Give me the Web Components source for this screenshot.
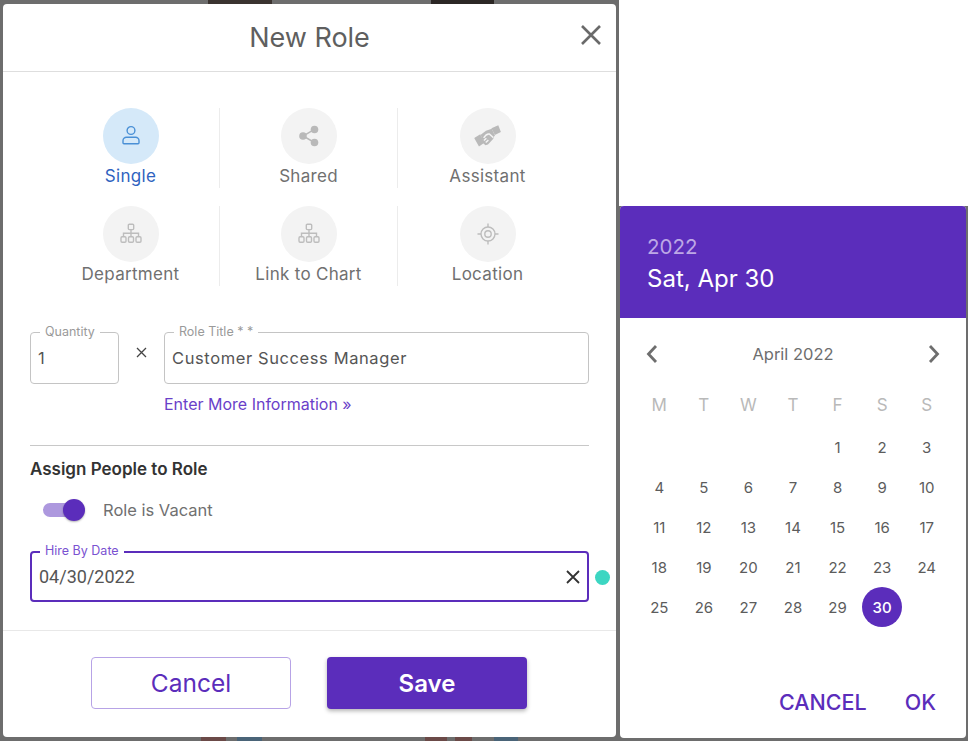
<!DOCTYPE html>
<html>
<head>
<meta charset="utf-8">
<title>New Role</title>
<style>
  html, body { margin: 0; padding: 0; background: #fff; }
  body { font-family: Inter, "Liberation Sans", sans-serif; }
</style>
</head>
<body>
<role-page></role-page>

<script>
const FONT = 'Inter, "Liberation Sans", sans-serif';

const ICONS = {
  person: `<circle cx="12" cy="6.5" r="3.9"/><path d="M7.5 13.2h9a3.5 3.5 0 0 1 3.5 3.5v2.1a.9.9 0 0 1-.9.9H4.9a.9.9 0 0 1-.9-.9v-2.1a3.5 3.5 0 0 1 3.5-3.5z"/>`,
  share: `<g fill="#b9b9b9" stroke="none"><circle cx="6" cy="12" r="3.8"/><circle cx="17.5" cy="5.5" r="3.8"/><circle cx="17.5" cy="18.5" r="3.8"/><path d="M6 11.2l11-6.5.8 1.4-11 6.5zM6.8 11.4l11 6.4-.8 1.4-11-6.4z"/></g>`,
  handshake: `<g stroke="none" fill="#b9b9b9"><path d="M15.5 4.6 21.6 2l2.3 6-5.4 2.7z"/><path d="M.2 13.4 5.6 10l3.6 7.6-4.8 3.2z"/><path d="M6 10.4l4.6-3.6 5.2-1.6 2.6 5.6-1.4 3.4-4.6 5-2.2.6-1.8-1.6z"/></g><path fill="none" stroke="#f3f3f3" stroke-width="1.3" d="M8.6 13.2c1.6-2.6 3-3.8 5-3.4l3.6 3.2M10.4 17.4l2.4-2.2M8.8 15.6l2.2-2"/>`,
  chart: `<rect x="9.3" y="2.2" width="5.4" height="5.4" rx="1"/><path d="M12 7.6v7M4.5 14.6v-3.3h15v3.3"/><rect x="2" y="14.8" width="5" height="5.4" rx="1.2"/><rect x="9.5" y="14.8" width="5" height="5.4" rx="1.2"/><rect x="17" y="14.8" width="5" height="5.4" rx="1.2"/>`,
  target: `<circle cx="12" cy="12" r="7"/><circle cx="12" cy="12" r="3.2"/><path d="M12 1.5V5M12 19v3.5M1.5 12H5M19 12h3.5"/>`,
};

class RoleOption extends HTMLElement {
  connectedCallback() {
    const active = this.hasAttribute('active');
    const icon = ICONS[this.getAttribute('icon')];
    this.attachShadow({ mode: 'open' }).innerHTML = `
      <style>
        :host {
          display: flex;
          flex-direction: column;
          align-items: center;
          height: 80px;
          font-family: ${FONT};
        }
        :host([divider]) { border-right: 1px solid #ececec; }
        .circle {
          width: 56px;
          height: 56px;
          border-radius: 50%;
          background: ${active ? '#d5e9f9' : '#f3f3f3'};
          display: flex;
          align-items: center;
          justify-content: center;
        }
        svg { width: 24px; height: 24px; fill: none; stroke: ${active ? '#4a90d6' : '#bdbdbd'}; stroke-width: 1.4; }
        :host([icon="handshake"]) svg { width: 27px; height: 27px; }
        .label {
          margin-top: 2px;
          line-height: 20px;
          font-size: 17px;
          letter-spacing: 0.3px;
          color: ${active ? '#2f63c0' : '#707070'};
          white-space: nowrap;
        }
      </style>
      <div class="circle"><svg viewBox="0 0 24 24">${icon}</svg></div>
      <div class="label"><slot></slot></div>
    `;
  }
}

class OutlinedField extends HTMLElement {
  connectedCallback() {
    const focused = this.hasAttribute('focused');
    this.attachShadow({ mode: 'open' }).innerHTML = `
      <style>
        :host { display: block; position: relative; font-family: ${FONT}; }
        .box {
          box-sizing: border-box;
          height: ${focused ? 51 : 52}px;
          border: ${focused ? '2px solid #5b2dbb' : '1px solid #c4c4c4'};
          border-radius: 4px;
          display: flex;
          align-items: center;
          padding: 0 7px;
          font-size: 16.5px;
          letter-spacing: 0.6px;
          color: #555;
        }
        .legend {
          position: absolute;
          left: 10px;
          top: -7px;
          padding: 0 5px;
          background: #fff;
          font-size: 12.5px;
          line-height: 14px;
          color: ${focused ? '#7a52d1' : '#9a9a9a'};
          white-space: nowrap;
        }
        .value { flex: 1; }
      </style>
      <div class="legend">${this.getAttribute('label')}</div>
      <div class="box"><div class="value"><slot></slot></div><slot name="end"></slot></div>
    `;
  }
}

class VacantToggle extends HTMLElement {
  connectedCallback() {
    this.attachShadow({ mode: 'open' }).innerHTML = `
      <style>
        :host {
          display: flex;
          align-items: center;
          height: 24px;
          padding-left: 13px;
          font-family: ${FONT};
          font-size: 16.5px;
          color: #707070;
        }
        .track { width: 37px; height: 14px; border-radius: 7px; background: #ad98de; display: flex; align-items: center; justify-content: flex-end; margin-right: 23px; }
        .thumb { width: 22px; height: 22px; border-radius: 50%; background: #5b2dbb; box-shadow: 0 1px 2px rgba(0,0,0,.3); flex: none; margin-right: -5px; }
      </style>
      <div class="track"><div class="thumb"></div></div>
      <slot></slot>
    `;
  }
}

class FormButton extends HTMLElement {
  connectedCallback() {
    this.attachShadow({ mode: 'open' }).innerHTML = `
      <style>
        :host {
          box-sizing: border-box;
          display: flex;
          align-items: center;
          justify-content: center;
          width: 200px;
          height: 52px;
          border-radius: 4px;
          font-family: ${FONT};
          font-size: 24.5px;
          border: 1px solid #b7a3e6;
          color: #5b2dbb;
          background: #fff;
        }
        :host([primary]) {
          border: none;
          background: #5b2dbb;
          color: #fff;
          font-size: 24px;
          font-weight: 600;
          box-shadow: 0 2px 4px rgba(0,0,0,.3);
        }
      </style>
      <slot></slot>
    `;
  }
}

class RoleModal extends HTMLElement {
  connectedCallback() {
    this.attachShadow({ mode: 'open' }).innerHTML = `
      <style>
        :host {
          display: block;
          width: 613px;
          height: 733px;
          background: #fff;
          border-radius: 4px;
          font-family: ${FONT};
          overflow: hidden;
        }
        header {
          height: 67px;
          border-bottom: 1px solid #dedede;
          display: flex;
          align-items: center;
          justify-content: center;
          position: relative;
          font-size: 27px;
          color: #5f5f5f;
        }
        .close { position: absolute; right: 13px; top: 19px; width: 24px; height: 24px; }
        .options {
          display: grid;
          grid-template-columns: 178px 178px 179px;
          row-gap: 18px;
          margin: 36px 0 0 39px;
        }
        .body { padding: 0 27px; }
        .row { display: flex; margin-top: 46px; }
        .qty { width: 89px; }
        .title { flex: 1; }
        .times { width: 45px; display: flex; justify-content: center; padding-top: 15px; box-sizing: border-box; }
        .times svg { width: 11px; height: 11px; }
        .more { margin: 10px 0 0 134px; line-height: 20px; font-size: 16px; color: #6a3fc9; }
        hr { border: none; height: 1px; background: #c8c8c8; margin: 31px 0 0; }
        h2 { margin: 13px 0 0; line-height: 20px; font-size: 17px; font-weight: 600; color: #333; }
        vacant-toggle { margin-top: 19px; }
        .hire { display: block; margin-top: 29px; position: relative; }
        .date { font-family: Roboto, "Liberation Sans", sans-serif; font-size: 18px; letter-spacing: 0; color: #555; }
        .clear { width: 16px; height: 16px; display: block; margin-right: -1px; }
        .dot { position: absolute; right: -21px; top: 19px; width: 15px; height: 15px; border-radius: 50%; background: #3cd6c2; }
        footer {
          margin-top: 28px;
          border-top: 1px solid #e8e8e8;
          padding: 26px 1px 0 0;
          display: flex;
          justify-content: center;
          gap: 36px;
        }
      </style>
      <header>
        New Role
        <svg class="close" viewBox="0 0 24 24"><path d="M3 3l18 18M21 3L3 21" stroke="#6a6a6a" stroke-width="2.6" fill="none"/></svg>
      </header>
      <div class="options">
        <role-option icon="person" active divider>Single</role-option>
        <role-option icon="share" divider>Shared</role-option>
        <role-option icon="handshake">Assistant</role-option>
        <role-option icon="chart" divider>Department</role-option>
        <role-option icon="chart" divider>Link to Chart</role-option>
        <role-option icon="target">Location</role-option>
      </div>
      <div class="body">
        <div class="row">
          <outlined-field class="qty" label="Quantity">1</outlined-field>
          <div class="times"><svg viewBox="0 0 11 11"><path d="M1 1l9 9M10 1l-9 9" stroke="#444" stroke-width="1.3" fill="none"/></svg></div>
          <outlined-field class="title" label="Role Title * *">Customer Success Manager</outlined-field>
        </div>
        <div class="more">Enter More Information »</div>
        <hr>
        <h2>Assign People to Role</h2>
        <vacant-toggle>Role is Vacant</vacant-toggle>
        <div class="hire">
          <outlined-field label="Hire By Date" focused>
            <span class="date">04/30/2022</span>
            <svg slot="end" class="clear" viewBox="0 0 16 16"><path d="M2 2l12 12M14 2L2 14" stroke="#333" stroke-width="1.8" fill="none"/></svg>
          </outlined-field>
          <div class="dot"></div>
        </div>
      </div>
      <footer>
        <form-button>Cancel</form-button>
        <form-button primary>Save</form-button>
      </footer>
    `;
  }
}

class DatePicker extends HTMLElement {
  connectedCallback() {
    const week = ['M', 'T', 'W', 'T', 'F', 'S', 'S'].map(d => `<div class="cell wd">${d}</div>`).join('');
    let days = '<div></div>'.repeat(4);
    for (let d = 1; d <= 30; d++) {
      days += `<div class="cell${d === 30 ? ' sel' : ''}"><span>${d}</span></div>`;
    }
    this.attachShadow({ mode: 'open' }).innerHTML = `
      <style>
        :host {
          display: block;
          width: 346px;
          height: 532px;
          background: #fff;
          border-radius: 4px;
          overflow: hidden;
          font-family: ${FONT};
        }
        .head {
          box-sizing: border-box;
          height: 112px;
          background: #5b2dbb;
          padding: 29px 27px 0;
        }
        .year { font-size: 20.5px; line-height: 24px; color: #bda8e6; }
        .full { font-size: 24px; line-height: 32px; color: #fff; margin-top: 4px; }
        .month {
          margin: 16px 17px 0 17px;
          height: 40px;
          padding: 0 8px;
          display: flex;
          align-items: center;
          justify-content: space-between;
          font-size: 16.5px;
          color: #6e6e6e;
        }
        .month svg { width: 16px; height: 20px; }
        .grid { display: grid; grid-template-columns: repeat(7, 1fr); margin: 0 17px; }
        .cell { height: 40px; display: flex; align-items: center; justify-content: center; font-size: 15px; color: #5c5c5c; }
        .week { margin-top: 11px; margin-bottom: 2px; }
        .wd { font-size: 17px; color: #b9b9b9; }
        .sel span {
          width: 40px;
          height: 40px;
          border-radius: 50%;
          background: #5b2dbb;
          color: #fff;
          font-weight: 500;
          display: flex;
          align-items: center;
          justify-content: center;
        }
        .actions {
          margin-top: 57px;
          height: 36px;
          padding-right: 30px;
          display: flex;
          justify-content: flex-end;
          align-items: center;
          gap: 38px;
          font-size: 21.5px;
          font-weight: 500;
          color: #5b2dbb;
        }
      </style>
      <div class="head">
        <div class="year">2022</div>
        <div class="full">Sat, Apr 30</div>
      </div>
      <div class="month">
        <svg viewBox="0 0 16 20"><path d="M11 2L3.5 10l7.5 8" stroke="#6e6e6e" stroke-width="2.8" fill="none"/></svg>
        <span>April 2022</span>
        <svg viewBox="0 0 16 20"><path d="M5 2l7.5 8L5 18" stroke="#6e6e6e" stroke-width="2.8" fill="none"/></svg>
      </div>
      <div class="grid week">${week}</div>
      <div class="grid">${days}</div>
      <div class="actions"><span>CANCEL</span><span>OK</span></div>
    `;
  }
}

class RolePage extends HTMLElement {
  connectedCallback() {
    this.attachShadow({ mode: 'open' }).innerHTML = `
      <style>
        :host { display: flex; width: 968px; height: 741px; overflow: hidden; background: #fff; }
        .left {
          box-sizing: border-box;
          width: 619px;
          padding: 4px 3px 4px 3px;
          background:
            linear-gradient(#3a3330, #3a3330) 208px 0 / 64px 4px no-repeat,
            linear-gradient(#2c2725, #2c2725) 431px 0 / 63px 4px no-repeat,
            linear-gradient(#6b4a48, #6b4a48) 201px 737px / 25px 4px no-repeat,
            linear-gradient(#4a6478, #4a6478) 237px 737px / 25px 4px no-repeat,
            linear-gradient(#6b4a48, #6b4a48) 425px 737px / 22px 4px no-repeat,
            linear-gradient(#6b4a48, #6b4a48) 455px 737px / 17px 4px no-repeat,
            linear-gradient(#4a6478, #4a6478) 494px 737px / 24px 4px no-repeat,
            #6d6d6d;
        }
        .right { flex: 1; display: flex; flex-direction: column; }
        .top { height: 206px; background: #fff; }
        .back { flex: 1; background: #6d6d6d; padding-left: 1px; }
      </style>
      <div class="left"><role-modal></role-modal></div>
      <div class="right">
        <div class="top"></div>
        <div class="back"><date-picker></date-picker></div>
      </div>
    `;
  }
}

customElements.define('role-option', RoleOption);
customElements.define('outlined-field', OutlinedField);
customElements.define('vacant-toggle', VacantToggle);
customElements.define('form-button', FormButton);
customElements.define('role-modal', RoleModal);
customElements.define('date-picker', DatePicker);
customElements.define('role-page', RolePage);
</script>
</body>
</html>
